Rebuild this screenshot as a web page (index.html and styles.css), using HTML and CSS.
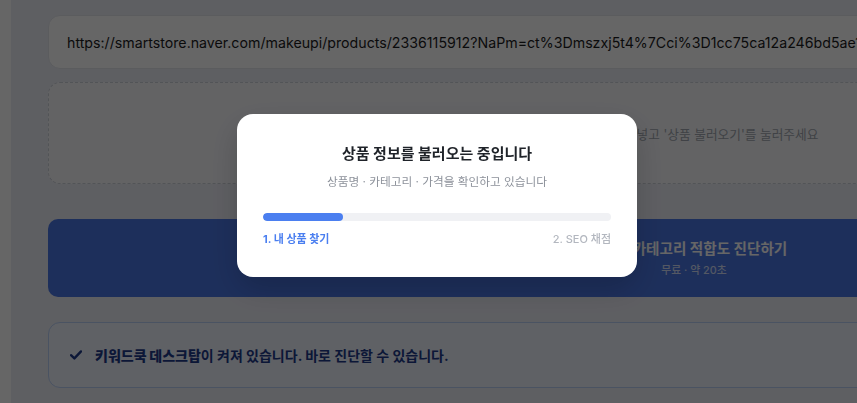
FILE: index.html
```html
<!DOCTYPE html>
<html lang="ko">
<head>
<meta charset="utf-8">
<title>상품 불러오기</title>
<link rel="stylesheet" href="styles.css">
</head>
<body>
<div class="app">
  <aside class="rail"></aside>
  <main class="main">
    <div class="url-field">https://smartstore.naver.com/makeupi/products/2336115912?NaPm=ct%3Dmszxj5t4%7Cci%3D1cc75ca12a246bd5ae13f0c2e9b7d4a1%7Ctr%3Dslsl</div>
    <div class="drop">상품 URL을 넣고 '상품 불러오기'를 눌러주세요</div>
    <button class="cta" type="button">
      <span class="cta-title">
        <svg class="cta-icon" width="26" height="18" viewBox="0 0 26 18" aria-hidden="true"><circle cx="14" cy="8" r="6" fill="none" stroke="#fff" stroke-width="2"/><line x1="18.5" y1="12.5" x2="23" y2="17" stroke="#fff" stroke-width="2" stroke-linecap="round"/></svg>
        카테고리 적합도 진단하기
      </span>
      <span class="cta-sub">무료 · 약 20초</span>
    </button>
    <div class="notice">
      <svg class="check" width="12" height="10" viewBox="0 0 12 10" aria-hidden="true"><polyline points="1,5.2 4.4,8.4 11,1.4" fill="none" stroke="#1e3a8a" stroke-width="2.4" stroke-linecap="round" stroke-linejoin="round"/></svg>
      <p class="notice-text"><strong>키워드쿡 데스크탑</strong>이 켜져 있습니다. 바로 진단할 수 있습니다.</p>
    </div>
  </main>
</div>

<div class="overlay">
  <div class="modal" role="dialog">
    <h2 class="modal-title">상품 정보를 불러오는 중입니다</h2>
    <p class="modal-sub">상품명 · 카테고리 · 가격을 확인하고 있습니다</p>
    <div class="progress"><div class="progress-fill" style="width: 80px"></div></div>
    <div class="steps">
      <span class="step step-active">1. 내 상품 찾기</span>
      <span class="step">2. SEO 채점</span>
    </div>
  </div>
</div>
</body>
</html>
```

FILE: styles.css
```css
html, body {
  margin: 0;
  padding: 0;
  overflow: hidden;
  height: 100%;
}

body {
  background: #ffffff;
  font-family: Inter, "Noto Sans CJK KR", "Noto Sans", sans-serif;
  color: #222;
}

.app {
  display: flex;
  min-height: 100%;
}

.rail {
  flex: 0 0 11px;
  background: #ffffff;
}

.main {
  flex: 1 0 auto;
  background: #eceef6;
  padding: 15px 0 0 37px;
  display: flex;
  flex-direction: column;
  align-items: flex-start;
}

.main > * {
  width: 1292px;
  flex: none;
  box-sizing: border-box;
}

.url-field {
  height: 54px;
  background: #ffffff;
  border: 1px solid #e3e5ec;
  border-radius: 12px;
  padding: 0 18px;
  display: flex;
  align-items: center;
  font-size: 14.2px;
  color: #1c1c1e;
  white-space: nowrap;
  overflow: hidden;
}

.drop {
  margin-top: 13px;
  height: 102px;
  background: #f7f8fb;
  border: 1px dashed #cdd1d9;
  border-radius: 12px;
  display: flex;
  align-items: center;
  justify-content: center;
  font-size: 12.7px;
  color: #a0a5ae;
}

.cta {
  margin-top: 35px;
  height: 78px;
  background: #4a76e4;
  border: 0;
  border-radius: 10px;
  display: flex;
  flex-direction: column;
  align-items: center;
  justify-content: center;
  gap: 5px;
  font-family: inherit;
  color: #fff;
  padding: 0;
}

.cta-title {
  display: flex;
  align-items: center;
  gap: 6px;
  font-size: 14.6px;
  font-weight: 700;
  line-height: 20px;
}

.cta-sub {
  font-size: 10.8px;
  font-weight: 500;
  color: rgba(255, 255, 255, 0.75);
  line-height: 14px;
}

.notice {
  margin-top: 25px;
  height: 66px;
  background: #edf2fc;
  border: 1px solid #b9cff6;
  border-radius: 12px;
  display: flex;
  align-items: center;
  gap: 13px;
  padding-left: 21px;
}

.check {
  flex: none;
}

.notice-text {
  margin: 0;
  font-size: 14px;
  font-weight: 700;
  color: #1e3a8a;
}

.notice-text strong {
  font-weight: 900;
}

.overlay {
  position: fixed;
  inset: 0;
  background: rgba(0, 0, 0, 0.6);
  display: flex;
  align-items: center;
  justify-content: center;
  padding: 0 0 12px 17px;
  box-sizing: border-box;
}

.modal {
  width: 400px;
  box-sizing: border-box;
  background: #ffffff;
  border-radius: 16px;
  padding: 30px 26px 31px;
  text-align: center;
  box-shadow: 0 12px 32px rgba(0, 0, 0, 0.18);
}

.modal-title {
  margin: 0;
  font-size: 15px;
  font-weight: 700;
  line-height: 20px;
  color: #1f2329;
}

.modal-sub {
  margin: 10px 0 0;
  font-size: 11.7px;
  line-height: 16px;
  color: #8d929b;
}

.progress {
  margin-top: 23px;
  height: 8px;
  border-radius: 4px;
  background: #f0f1f4;
  overflow: hidden;
}

.progress-fill {
  height: 100%;
  border-radius: 4px;
  background: #4b7ff0;
}

.steps {
  margin-top: 11px;
  display: flex;
  justify-content: space-between;
  line-height: 14px;
}

.step {
  font-size: 11px;
  font-weight: 500;
  color: #b3b7bf;
}

.step-active {
  font-weight: 700;
  color: #4b7ff0;
}
```
